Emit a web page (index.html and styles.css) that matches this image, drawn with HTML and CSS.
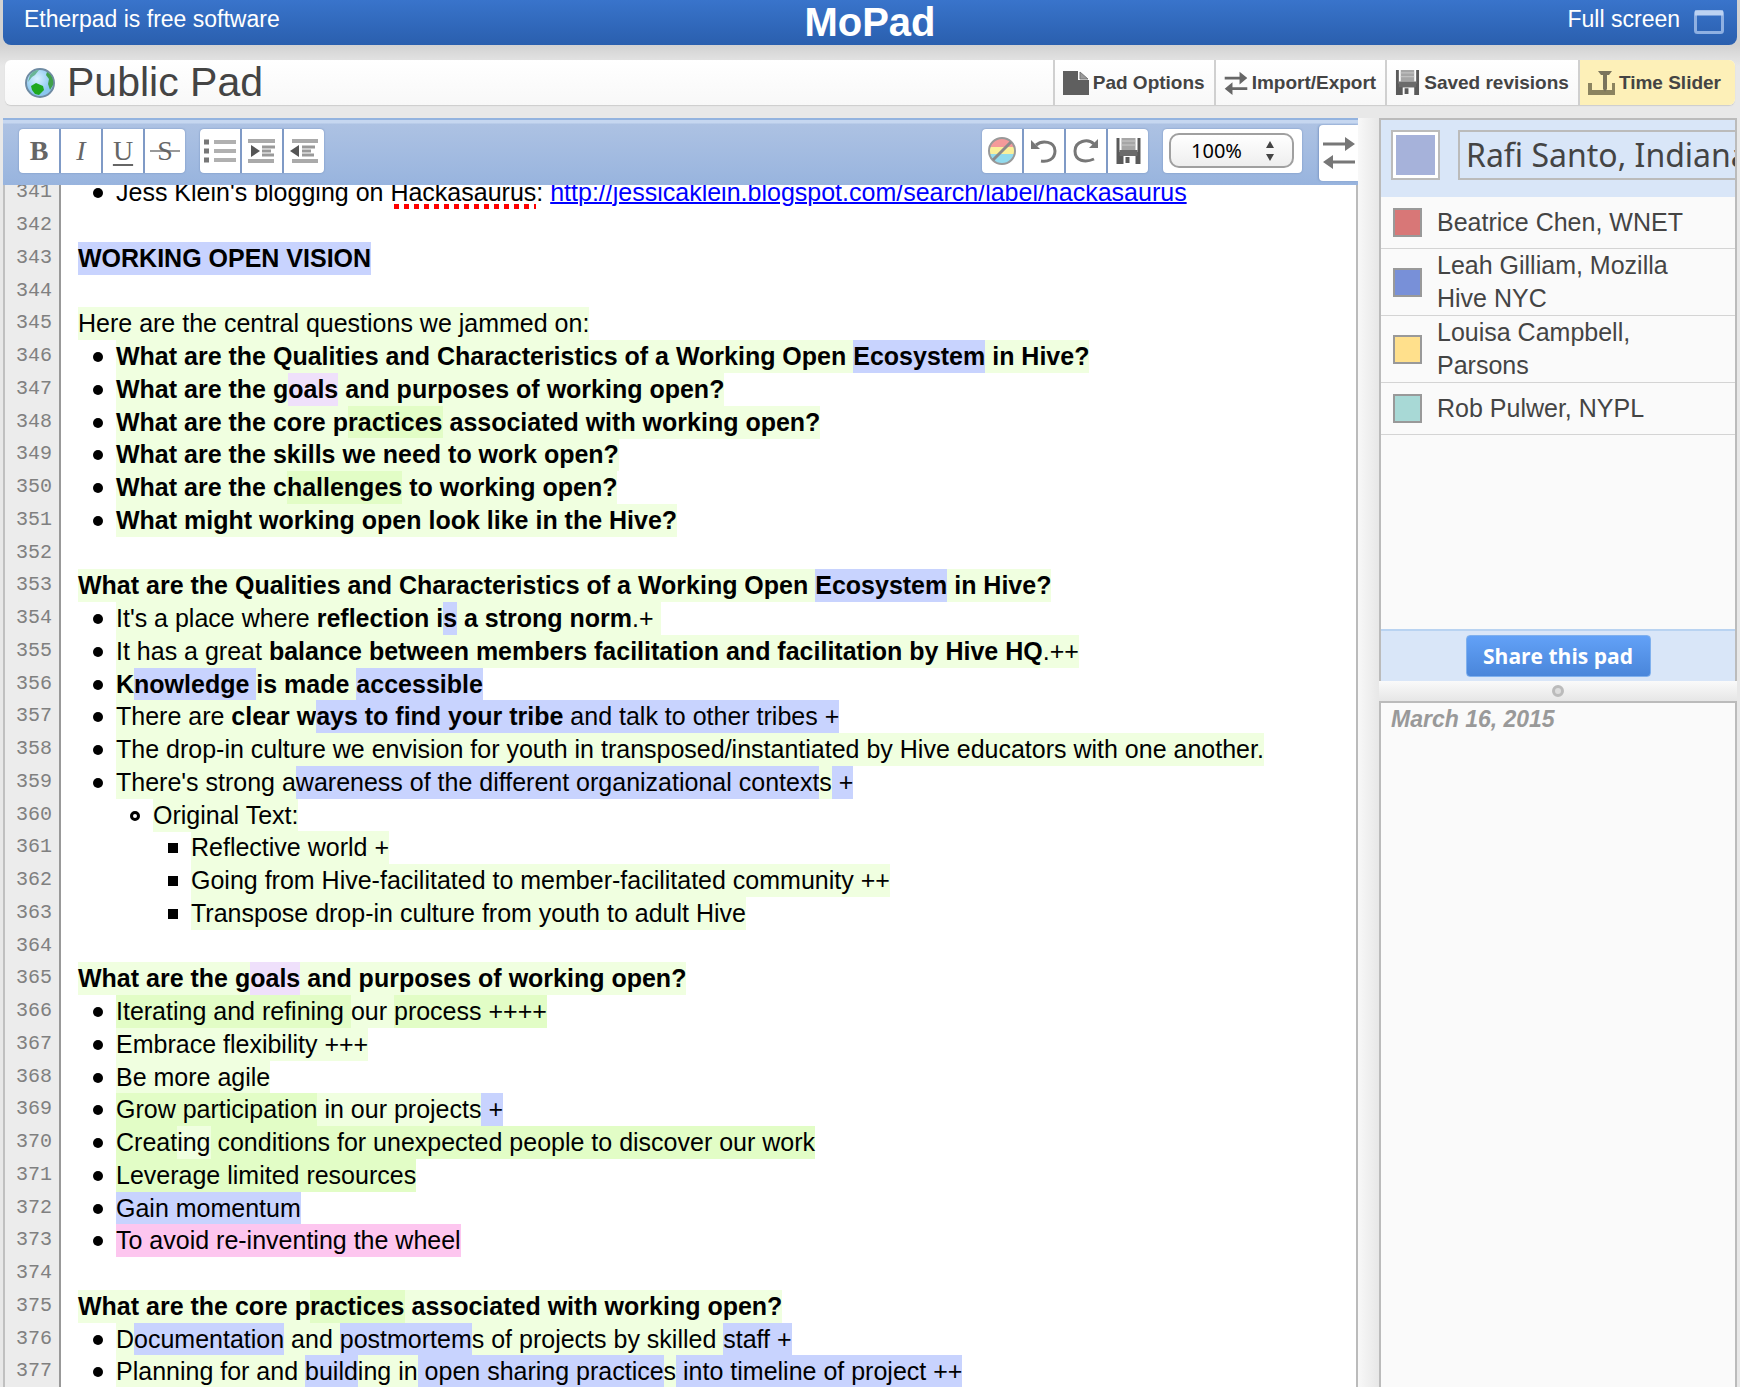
FILE: index.html
```html
<!DOCTYPE html>
<html lang="en">
<head>
<meta charset="utf-8">
<title>MoPad: Public Pad</title>
<link rel="stylesheet" href="styles.css">
</head>
<body>
<svg width="0" height="0" class="defs" aria-hidden="true">
  <symbol id="floppy" viewBox="0 0 26 26">
    <path d="M1 0h3v14h18V0h3v26H20v-8H8v8H1z" fill="#5a5a5a"/>
    <path d="M6 0h14v12H6z" fill="#a6a6a6"/>
    <path d="M6 3h14M6 7h14" stroke="#c9c9c9" stroke-width="1"/>
    <path d="M4 12h18v6H4z" fill="#6b6b6b"/>
    <path d="M10 19h4v6h-4z" fill="#5a5a5a"/>
  </symbol>
  <symbol id="swap" viewBox="0 0 34 34">
    <path d="M1 10h28M5 25h28" stroke="#666" stroke-width="4" fill="none"/>
    <path d="M22 1l11 9-11 9zM12 16L1 25l11 9z" fill="#666"/>
  </symbol>
</svg>
<div class="page">
  <header class="topbar">
    <a class="top-link" href="#software">Etherpad is free software</a>
    <a class="brand" href="#home">MoPad</a>
    <a class="top-link full" href="#full">Full screen
      <svg width="30" height="24" viewBox="0 0 30 24" aria-hidden="true"><rect x="1.500" y="1.500" width="27" height="21" rx="2" fill="none" stroke="#8fb0e2" stroke-width="3"/><path d="M1 3h28" stroke="#bcd2f2" stroke-width="5"/></svg>
    </a>
  </header>

  <div class="titlebar">
    <svg class="globe" width="30" height="30" viewBox="0 0 30 30" aria-hidden="true">
      <defs><radialGradient id="sea" cx="40%" cy="35%"><stop offset="0" stop-color="#d8f1ff"/><stop offset="1" stop-color="#8cc8f0"/></radialGradient></defs>
      <circle cx="15" cy="15" r="14" fill="url(#sea)" stroke="#6f8ba3" stroke-width="2"/>
      <path d="M5 7c3-4 6-5 9-5l-4 5-3 2-4 5z" fill="#69b596"/>
      <path d="M22 4c5 3 7 8 6 13l-3 5-2-6 1-5-3-4z" fill="#3fa04a"/>
      <path d="M6 18l5-3 7 3 1 4-5 5-4-1-3-4z" fill="#1fa81f"/>
    </svg>
    <h1>Public Pad</h1>
    <nav class="tabs">
      <button type="button"><svg width="26" height="24" viewBox="0 0 26 24" aria-hidden="true"><path d="M0 0h15v9h11v15H0z" fill="#5f5f5f"/><path d="M17 1l8 7h-8z" fill="#999" stroke="#777"/></svg>Pad Options</button>
      <button type="button"><svg width="24" height="24" viewBox="0 0 34 34" aria-hidden="true"><use href="#swap"/></svg>Import/Export</button>
      <button type="button"><svg width="25" height="25" viewBox="0 0 26 26" aria-hidden="true"><use href="#floppy"/></svg>Saved revisions</button>
      <button type="button" class="slider"><svg width="27" height="24" viewBox="0 0 27 24" aria-hidden="true"><path d="M0 12h4v7h20v-7h3v12H0z" fill="#8b835f"/><path d="M10 0h14l-3 4h-2v14l-2 3-2-3V4h-2z" fill="#7a745c"/></svg>Time Slider</button>
    </nav>
  </div>

  <div class="workspace">
    <main class="editor">
      <div class="toolbar">
        <div class="group">
          <button type="button" aria-label="Bold" class="glyph bold">B</button>
          <button type="button" aria-label="Italic" class="glyph italic">I</button>
          <button type="button" aria-label="Underline" class="glyph under">U</button>
          <button type="button" aria-label="Strikethrough" class="glyph strike">S</button>
        </div>
        <div class="group">
          <button type="button" aria-label="Bulleted list"><svg width="32" height="26" viewBox="0 0 32 26"><path d="M10 4h22M10 13h22M10 22h22" stroke="#b0b0b0" stroke-width="4"/><path d="M0 4h5M0 13h5M0 22h5" stroke="#777" stroke-width="5"/></svg></button>
          <button type="button" aria-label="Indent"><svg width="28" height="24" viewBox="0 0 28 24"><path d="M0 2h27M0 22h26" stroke="#aaa" stroke-width="4"/><path d="M14 8h13M14 12h9M14 16h12" stroke="#999" stroke-width="3"/><path d="M3 6l9 6-9 6z" fill="#555"/></svg></button>
          <button type="button" aria-label="Outdent"><svg width="28" height="24" viewBox="0 0 28 24"><path d="M2 2h26M2 22h26" stroke="#aaa" stroke-width="4"/><path d="M12 8h13M12 12h9M12 16h12" stroke="#999" stroke-width="3"/><path d="M9 6l-9 6 9 6z" fill="#555"/></svg></button>
        </div>
        <div class="group right">
          <button type="button" aria-label="Clear authorship colors"><svg width="30" height="30" viewBox="0 0 30 30"><defs><clipPath id="disc"><circle cx="15" cy="15" r="13"/></clipPath></defs><g clip-path="url(#disc)"><path d="M0 0h30v11H0z" fill="#f49a9a"/><path d="M0 11h30v7H0z" fill="#faf09a"/><path d="M0 18h30v12H0z" fill="#92dbee"/></g><circle cx="15" cy="15" r="13" fill="none" stroke="#999" stroke-width="2"/><path d="M6 24L24 6" stroke="#8a8a8a" stroke-width="3"/></svg></button>
          <button type="button" aria-label="Undo"><svg width="28" height="26" viewBox="0 0 28 26"><path d="M6 7c6-5 19-4 19 6 0 9-8 11-14 10" fill="none" stroke="#777" stroke-width="3"/><path d="M1 2v9h9z" fill="#777"/></svg></button>
          <button type="button" aria-label="Redo"><svg width="28" height="26" viewBox="0 0 28 26"><path d="M22 6C16 0 3 3 3 13s10 12 19 8" fill="none" stroke="#777" stroke-width="3"/><path d="M26 1v9h-9z" fill="#777"/></svg></button>
          <button type="button" aria-label="Save revision"><svg width="27" height="26" viewBox="0 0 26 26"><use href="#floppy"/></svg></button>
        </div>
        <div class="zoombox">
          <div class="zoomselect">
            <select aria-label="Zoom"><option>100%</option></select>
            <svg width="10" height="20" viewBox="0 0 10 20" aria-hidden="true"><path d="M5 0l4 7H1zM5 20l4-7H1z" fill="#444"/></svg>
          </div>
        </div>
        <button type="button" class="swap" aria-label="Toggle sidebar"><svg width="34" height="32" viewBox="0 0 34 32"><path d="M1 7h28M5 25h28" stroke="#777" stroke-width="3"/><path d="M23 0l10 7-10 7zM11 18L1 25l10 7z" fill="#777"/></svg></button>
      </div>
      <div class="pad">
        <div class="gutter">
          <div>341</div><div>342</div><div>343</div><div>344</div><div>345</div><div>346</div><div>347</div><div>348</div><div>349</div><div>350</div><div>351</div><div>352</div><div>353</div><div>354</div><div>355</div><div>356</div><div>357</div><div>358</div><div>359</div><div>360</div><div>361</div><div>362</div><div>363</div><div>364</div><div>365</div><div>366</div><div>367</div><div>368</div><div>369</div><div>370</div><div>371</div><div>372</div><div>373</div><div>374</div><div>375</div><div>376</div><div>377</div>
        </div>
        <div class="doc">
          <div class="l1">Jess Klein's blogging on <span class="misspelt">Hackasaurus</span>: <a href="http://jessicaklein.blogspot.com/search/label/hackasaurus">http://jessicaklein.blogspot.com/search/label/hackasaurus</a></div>
          <div></div>
          <div><b class="blue">WORKING OPEN VISION</b></div>
          <div></div>
          <div><span class="pale">Here are the central questions we jammed on:</span></div>
          <div class="l1"><b class="pale">What are the Qualities and Characteristics of a Working Open </b><b class="blue">Ecosystem</b><b class="pale"> in Hive?</b></div>
          <div class="l1"><b class="pale">What are the g</b><b class="lilac">oals</b><b class="pale"> and purposes of working open?</b></div>
          <div class="l1"><b class="pale">What are the core p</b><b class="green">ractices</b><b class="pale"> associated with working open?</b></div>
          <div class="l1"><b class="pale">What are the skills we need to work open?</b></div>
          <div class="l1"><b class="pale">What are the c</b><b class="green">hallenges</b><b class="pale"> to working open?</b></div>
          <div class="l1"><b class="pale">What might working open look like in the Hive?</b></div>
          <div></div>
          <div><b class="pale">What are the Qualities and Characteristics of a Working Open </b><b class="blue">Ecosystem</b><b class="pale"> in Hive?</b></div>
          <div class="l1"><span class="pale">It's a place where <b>reflection i</b></span><b class="blue">s</b><span class="pale"><b> a strong norm</b>.+ </span></div>
          <div class="l1"><span class="pale">It has a great <b>balance between members facilitation and facilitation by Hive HQ</b>.++</span></div>
          <div class="l1"><b class="pale">K</b><b class="blue">nowledge </b><b class="pale">is made </b><b class="blue">accessible</b></div>
          <div class="l1"><span class="pale">There are <b>clear w</b></span><span class="blue"><b>ays to find your tribe</b> and talk to other tribes +</span></div>
          <div class="l1"><span class="pale">The drop-in culture we envision for youth in transposed/instantiated by Hive educators with one another.</span></div>
          <div class="l1"><span class="pale">There's strong a</span><span class="blue">wareness of the different organizational context</span><span class="pale">s</span><span class="blue"> +</span></div>
          <div class="l2"><span class="pale">Original Text:</span></div>
          <div class="l3"><span class="pale">Reflective world +</span></div>
          <div class="l3"><span class="pale">Going from Hive-facilitated to member-facilitated community ++</span></div>
          <div class="l3"><span class="pale">Transpose drop-in culture from youth to adult Hive</span></div>
          <div></div>
          <div><b class="pale">What are the g</b><b class="lilac">oals</b><b class="pale"> and purposes of working open?</b></div>
          <div class="l1"><span class="green">Iterating and refining </span><span class="pale">our </span><span class="green">process ++++</span></div>
          <div class="l1"><span class="pale">Embrace flexibility +++</span></div>
          <div class="l1"><span class="pale">Be more agile</span></div>
          <div class="l1"><span class="green">Grow participation</span><span class="pale"> in our projects</span><span class="blue"> +</span></div>
          <div class="l1"><span class="green">Creat</span><span class="pale">ing</span><span class="green"> conditions for unexpected people to discover our work</span></div>
          <div class="l1"><span class="green">Leverage limited resources</span></div>
          <div class="l1"><span class="blue">Gain momentum</span></div>
          <div class="l1"><span class="pink">To avoid re-inventing the wheel</span></div>
          <div></div>
          <div><b class="pale">What are the core p</b><b class="green">ractices</b><b class="pale"> associated with working open?</b></div>
          <div class="l1"><span class="pale">D</span><span class="blue">ocumentation</span><span class="pale"> and </span><span class="blue">postmortem</span><span class="pale">s of projects by skilled </span><span class="blue">staff +</span></div>
          <div class="l1"><span class="pale">Planning for and </span><span class="blue">build</span><span class="pale">ing in</span><span class="blue"> open sharing practice</span><span class="pale">s</span><span class="blue"> into timeline of project ++</span></div>
        </div>
      </div>
    </main>

    <aside class="sidebar">
      <section class="users">
        <div class="me">
          <button type="button" class="mycolor" aria-label="Change my color"></button>
          <input type="text" aria-label="Your name" value="Rafi Santo, Indiana University">
        </div>
        <ul>
          <li><i class="chip red"></i><span>Beatrice Chen, WNET</span></li>
          <li><i class="chip indigo"></i><span>Leah Gilliam, Mozilla Hive NYC</span></li>
          <li><i class="chip yellow"></i><span>Louisa Campbell, Parsons</span></li>
          <li><i class="chip teal"></i><span>Rob Pulwer, NYPL</span></li>
        </ul>
        <div class="share"><button type="button">Share this pad</button></div>
      </section>
      <div class="handle"><i></i></div>
      <section class="chat"><h2>March 16, 2015</h2></section>
    </aside>
  </div>
</div>
</body>
</html>
```
FILE: styles.css
```css
*, *::before { box-sizing: border-box; }
body {
  margin: 0;
  font-family: "Liberation Sans", Arial, sans-serif;
  background: #e8e8e8;
  color: #000;
}
button { font: inherit; color: inherit; margin: 0; padding: 0; border: 0; background: none; }
svg { display: block; flex: none; }
.defs { position: absolute; }

.page {
  display: flex;
  flex-direction: column;
  height: 100vh;
  overflow: hidden;
  padding: 0 3px;
  background: linear-gradient(#d2d2d2 45px, #e8e8e8 66px);
}

/* Top bar */
.topbar {
  display: grid;
  grid-template-columns: 1fr auto 1fr;
  align-items: center;
  flex: none;
  height: 45px;
  padding: 0 13px 0 21px;
  border-radius: 0 0 8px 8px;
  background: linear-gradient(#3974cb, #2a5fae);
  color: #fff;
}
.topbar a { color: #fff; text-decoration: none; }
.top-link { font-size: 23px; line-height: 26px; padding-bottom: 8px; }
.full { display: flex; justify-content: flex-end; align-items: center; gap: 14px; }
.full svg { margin-top: 6px; }
.topbar .brand { padding-right: 8px; font-size: 40px; line-height: 43px; font-weight: bold; }

/* Pad title and its tabs */
.titlebar {
  display: flex;
  align-items: center;
  flex: none;
  height: 45px;
  margin: 15px 2px 13px;
  padding-left: 20px;
  border-radius: 6px;
  background: linear-gradient(#fff, #f8f8f8);
  box-shadow: 0 1px 1px #ccc;
  overflow: hidden;
}
.titlebar h1 { flex: 1; margin: 0 0 0 12px; font-size: 41px; line-height: 45px; font-weight: normal; color: #444; }
.tabs { display: flex; align-self: stretch; }
.tabs button {
  display: flex;
  align-items: center;
  gap: 4px;
  padding: 0 9px 0 8px;
  border-left: 2px solid #d0d0d0;
  font-size: 19px;
  font-weight: bold;
  color: #444;
}
.tabs .slider { background: #fdf0b8; padding-right: 14px; }

.workspace { display: flex; flex: 1; min-height: 0; }

/* Editor */
.editor { display: flex; flex-direction: column; flex: 1; min-width: 0; }
.toolbar {
  display: flex;
  align-items: flex-start;
  gap: 15px;
  flex: none;
  height: 67px;
  padding: 7px 0 0 16px;
  border-top: 2px solid #93b3df;
  background: linear-gradient(#c6d7f0 3px, #adc2e3 4px, #98b4de);
}
.group {
  display: flex;
  gap: 2px;
  margin-top: 2px;
  border-radius: 4px;
  background: #7f9ac6;
  box-shadow: 0 0 2px #6f8cba;
  overflow: hidden;
}
.group button {
  display: flex;
  align-items: center;
  justify-content: center;
  width: 40px;
  height: 44px;
  background: #fff;
}
.group.right { margin-left: auto; }
.glyph { font-family: "Liberation Serif", serif; font-size: 28px; line-height: 30px; color: #666; }
.bold { font-weight: bold; }
.italic { font-style: italic; }
.under { text-decoration: underline; text-decoration-thickness: 2px; text-underline-offset: 4px; }
.group .strike { background: linear-gradient(#999, #999) center / 30px 2px no-repeat #fff; }
.zoombox { margin-top: 2px; padding: 4px 8px 5px 6px; border-radius: 4px; background: #fff; box-shadow: 0 0 2px #6f8cba; }
.zoomselect {
  display: flex;
  align-items: center;
  width: 125px;
  height: 35px;
  padding-right: 17px;
  border: 2px solid #a0a0a0;
  border-radius: 10px;
  background: linear-gradient(#fff, #eee);
}
.zoomselect select {
  flex: 1;
  min-width: 0;
  appearance: none;
  padding: 0 0 0 20px;
  border: 0;
  background: none;
  font-family: "Noto Sans", sans-serif;
  font-size: 20px;
  line-height: 30px;
  color: #000;
}
.swap {
  display: flex;
  align-items: center;
  justify-content: center;
  width: 39px;
  height: 56px;
  margin: -2px 0 0 2px;
  border-radius: 4px 0 0 4px;
  background: #fff;
  box-shadow: -1px 0 2px #7f9ac6;
}

.pad { display: flex; flex: 1; min-height: 0; overflow: hidden; background: #fff; border-right: 2px solid #bbb; }
.gutter {
  flex: none;
  width: 58px;
  padding-right: 7px;
  border-left: 2px solid #c0c0c0;
  border-right: 2px solid #999;
  background: #ececec;
  font-family: "Liberation Mono", monospace;
  font-size: 20px;
  line-height: 31px;
  text-align: right;
  color: #808080;
}
.doc { flex: 1; padding-left: 17px; font-size: 25px; line-height: 33px; }
/* The pad is scrolled part of a line down. */
.gutter, .doc { margin-top: -9px; }
.gutter div, .doc div { height: 33px; }
.gutter div:nth-child(4n), .doc div:nth-child(4n) { height: 32px; }
.doc div { white-space: pre; }
.doc div > [class] { padding: 2px 0 3px; }

.l1::before, .l2::before, .l3::before {
  content: "";
  display: inline-block;
  width: 10px;
  height: 10px;
  margin: 0 13px 3px 15px;
  border-radius: 5px;
  background: #000;
}
.l2 { padding-left: 37px; }
.l3 { padding-left: 75px; }
.l2::before { background: none; border: 3px solid #000; }
.l3::before { border-radius: 0; }

.pale { background: #f0ffe0; }
.green { background: #e2fdc6; }
.blue { background: #c8d3fe; }
.lilac { background: #efe0fb; }
.pink { background: #fdc6ef; }
.doc a { color: #00f; text-decoration-thickness: 2px; }
.doc .misspelt { padding-bottom: 1px; background: repeating-linear-gradient(90deg, #f00 0 5px, transparent 5px 10px) 4px 100% / 100% 5px no-repeat; }

/* Sidebar */
.sidebar { display: flex; flex-direction: column; flex: none; width: 379px; padding-left: 21px; background: linear-gradient(90deg, #f8f8f8, #e8e8e8 20px); }
.users { display: flex; flex-direction: column; flex: none; height: 563px; border: 2px solid #bbb; border-bottom: 0; background: #fafafa; overflow: hidden; }
.me { display: flex; align-items: flex-start; gap: 18px; flex: none; height: 77px; padding: 10px 0 0 10px; background: #d9e6f8; }
.mycolor { flex: none; width: 49px; height: 50px; border: 2px solid #bbb; background: #a6b2da; box-shadow: inset 0 0 0 3px #fff; }
.me input {
  flex: none;
  width: 500px;
  height: 50px;
  padding: 0 6px 2px;
  border: 2px solid #bbb;
  background: none;
  font-family: "Noto Sans", sans-serif;
  font-size: 32px;
  color: #444;
}
.users ul { flex: 1; margin: 0; padding: 0; list-style: none; }
.users li {
  display: flex;
  align-items: center;
  gap: 15px;
  min-height: 52px;
  padding: 0 30px 0 12px;
  border-bottom: 1px solid #d4d4d4;
  font-size: 25px;
  line-height: 33px;
  color: #444;
}
.chip { flex: none; width: 29px; height: 29px; border: 2px solid #999; }
.red { background: #d87777; }
.indigo { background: #7890d8; }
.yellow { background: #ffe08c; }
.teal { background: #a8d9d6; }
.share { display: flex; justify-content: center; flex: none; height: 52px; padding-top: 4px; border-top: 2px solid #b9d3f1; background: #d9e6f8; }
.share button {
  width: 185px;
  height: 42px;
  border: 1px solid #7fb0ee;
  border-radius: 4px;
  background: linear-gradient(#62a1f7, #4a86da);
  font-family: "Open Sans", sans-serif;
  font-size: 21px;
  font-weight: bold;
  color: #fff;
}
.handle { display: flex; align-items: center; justify-content: center; flex: none; height: 20px; background: linear-gradient(#fafafa, #e6e6e6); }
.handle i { width: 12px; height: 12px; border: 3px solid #bbb; border-radius: 6px; background: #ddd; }
.chat { flex: 1; padding: 1px 10px; border: 2px solid #bbb; border-bottom: 0; background: #fafafa; }
.chat h2 { margin: 0; font-size: 23px; line-height: 30px; font-style: italic; color: #999; }
```
